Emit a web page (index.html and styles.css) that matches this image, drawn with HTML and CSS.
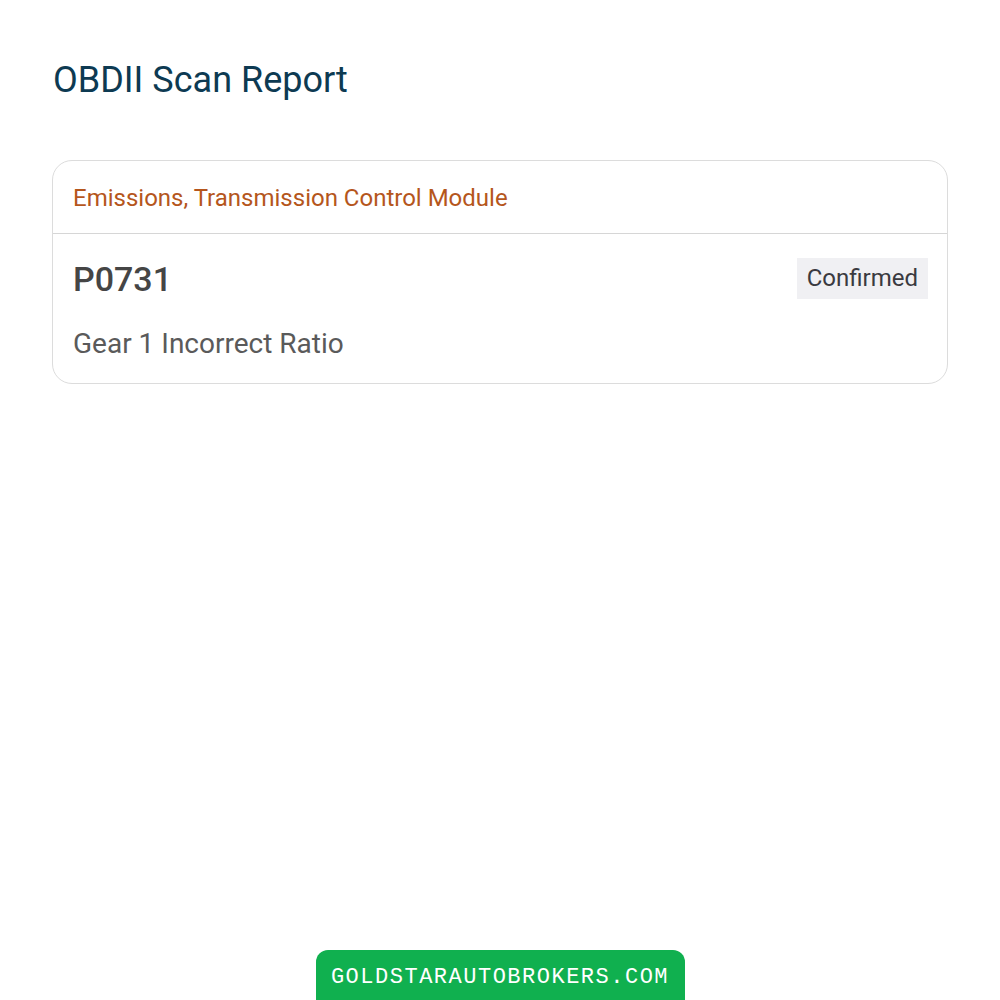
FILE: index.html
```html
<!DOCTYPE html>
<html lang="en">
<head>
    <meta charset="UTF-8">
    <meta name="viewport" content="width=device-width, initial-scale=1.0">
    <title>OBDII Scan Report</title>
    <link rel="stylesheet" href="styles.css">
</head>
<body>
    <div class="page">
        <h1 class="title">OBDII Scan Report</h1>

        <div class="card">
            <div class="card-header">Emissions, Transmission Control Module</div>
            <div class="card-body">
                <div class="code-row">
                    <span class="code">P0731</span>
                    <span class="status">Confirmed</span>
                </div>
                <div class="description">Gear 1 Incorrect Ratio</div>
            </div>
        </div>
    </div>

    <div class="footer">
        <span class="brand">GOLDSTARAUTOBROKERS.COM</span>
    </div>
</body>
</html>
```

FILE: styles.css
```css
body {
    margin: 0;
    height: 1000px;
    background: #fff;
    font-family: Roboto, "Noto Sans", Arial, sans-serif;
    display: flex;
    flex-direction: column;
    overflow: hidden;
}

.page {
    flex: 1;
    padding: 0 52px;
}

.title {
    margin: 58px 0 58px 1px;
    font-size: 36px;
    font-weight: 400;
    line-height: 44px;
    color: #0d3a52;
}

.card {
    border: 1px solid #dcdcdc;
    border-radius: 20px;
    overflow: hidden;
}

.card-header {
    padding: 21px 20px 18px;
    font-size: 24px;
    line-height: 33px;
    color: #b5561c;
    border-bottom: 1px solid #d6d6d6;
}

.card-body {
    padding: 24px 19px 21px 20px;
}

.code-row {
    display: flex;
    align-items: center;
    justify-content: space-between;
}

.code {
    font-size: 34px;
    font-weight: 500;
    color: #454545;
}

.status {
    padding: 4px 10px;
    background: #f0f0f3;
    font-size: 24px;
    line-height: 33px;
    color: #3a3a40;
}

.description {
    margin-top: 27px;
    font-size: 28px;
    line-height: 36px;
    color: #5a5a5a;
}

.footer {
    display: flex;
    justify-content: center;
}

.brand {
    width: 369px;
    height: 50px;
    box-sizing: border-box;
    padding-top: 15px;
    text-align: center;
    background: #10b04f;
    border-radius: 12px 12px 0 0;
    font-family: "Liberation Mono", "Courier New", monospace;
    font-size: 22px;
    letter-spacing: 1.5px;
    color: #fff;
}
```
